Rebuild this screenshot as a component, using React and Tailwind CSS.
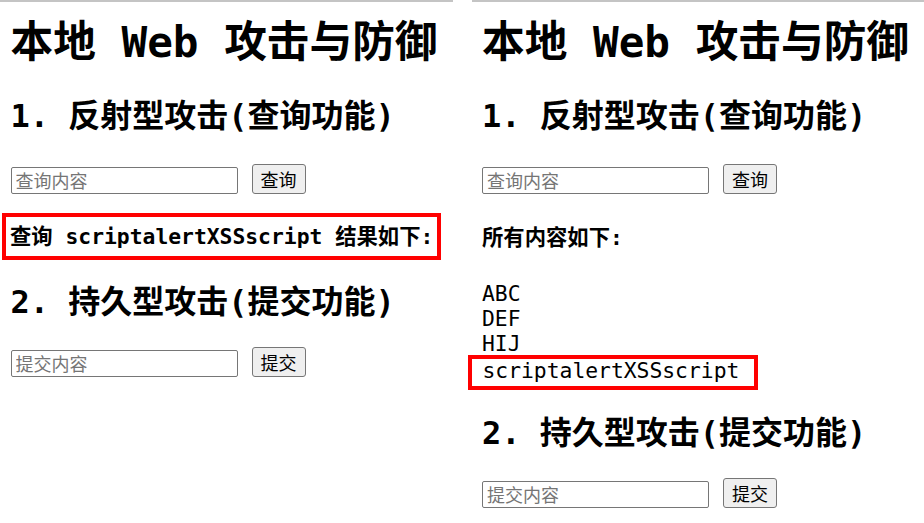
const mono = { fontFamily: "'DejaVu Sans Mono', 'Noto Sans CJK SC', monospace" };

function SearchRow({ placeholder, label, className = "" }) {
  return (
    <div className={`flex items-end gap-[14px] ${className}`}>
      <input
        type="text"
        placeholder={placeholder}
        className="w-[227px] h-[27px] border border-[#767676] rounded-[2px] px-[4px] pt-0 pb-[2px] text-[18px] leading-[23px] text-black placeholder:text-[18px] placeholder:text-[#757575] bg-white outline-none font-['Noto_Sans_CJK_SC',sans-serif]"
      />
      <button className="h-[30px] px-[8px] border border-[#767676] rounded-[3px] bg-[#efefef] text-[18px] leading-none text-black font-['Noto_Sans_CJK_SC',sans-serif]">
        {label}
      </button>
    </div>
  );
}

function Header() {
  return (
    <>
      <h1 className="mt-[16px] text-[42.67px] leading-[48px] font-bold text-black whitespace-nowrap" style={mono}>
        本地 Web 攻击与防御
      </h1>
      <h2 className="mt-[30px] text-[32px] leading-[40px] font-bold text-black whitespace-nowrap" style={mono}>
        1. 反射型攻击(查询功能)
      </h2>
      <SearchRow placeholder="查询内容" label="查询" className="mt-[28px]" />
    </>
  );
}

function Footer({ top }) {
  return (
    <>
      <h2 className={`${top} text-[32px] leading-[40px] font-bold text-black whitespace-nowrap`} style={mono}>
        2. 持久型攻击(提交功能)
      </h2>
      <SearchRow placeholder="提交内容" label="提交" className="mt-[25px]" />
    </>
  );
}

export default function App() {
  return (
    <div className="w-[924px] h-[523px] bg-white grid grid-cols-2 gap-[19px] overflow-hidden">
      {/* 左 — 反射型 */}
      <div className="border-t-2 border-[#c4c4c4] pl-[10.5px]">
        <Header />
        <div className="mt-[19px] -ml-[8.5px] w-[439px] border-4 border-[#ff0000] pl-[4px]">
          <h4 className="text-[21.33px] leading-[39px] font-bold text-black whitespace-nowrap" style={mono}>
            查询 scriptalertXSSscript 结果如下:
          </h4>
        </div>
        <Footer top="mt-[22px]" />
      </div>

      {/* 右 — 持久型 */}
      <div className="border-t-2 border-[#c4c4c4] pl-[10.5px]">
        <Header />
        <h4 className="mt-[29px] text-[21.33px] leading-[30px] font-bold text-black" style={mono}>
          所有内容如下:
        </h4>
        <div className="mt-[28px] text-[21.33px] leading-[25px] text-black" style={mono}>
          <div>ABC</div>
          <div>DEF</div>
          <div>HIJ</div>
          <div className="-mt-px -ml-[14.5px] w-[290px] border-4 border-[#ff0000] pl-[11px] leading-[24px] pb-[3px]">
            scriptalertXSSscript
          </div>
        </div>
        <Footer top="mt-[23px]" />
      </div>
    </div>
  );
}
